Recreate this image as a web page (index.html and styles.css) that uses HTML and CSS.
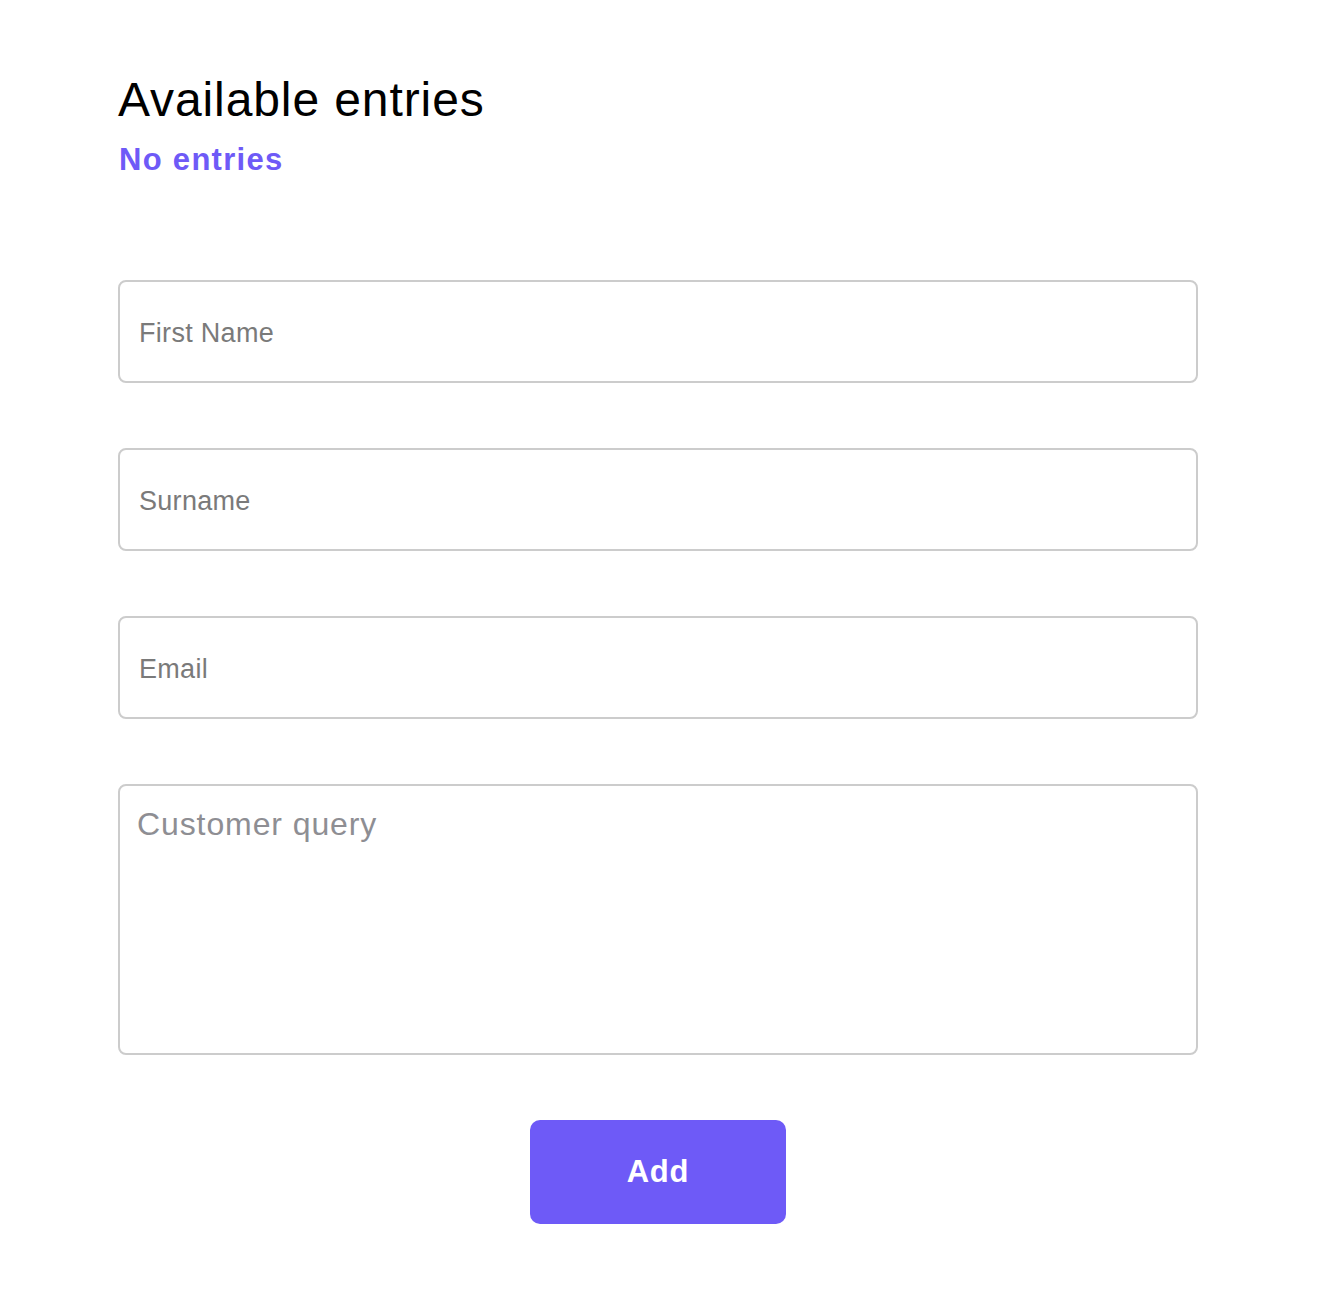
FILE: index.html
```html
<!DOCTYPE html>
<html lang="en">
<head>
<meta charset="utf-8">
<title>Available entries</title>
<link rel="stylesheet" href="styles.css">
</head>
<body>
<main class="page">
  <header class="summary">
    <h1 class="title">Available entries</h1>
    <p class="status">No entries</p>
  </header>
  <form class="entry-form">
    <input class="field" type="text" placeholder="First Name">
    <input class="field" type="text" placeholder="Surname">
    <input class="field" type="email" placeholder="Email">
    <textarea class="field field-area" placeholder="Customer query"></textarea>
    <button class="add-btn" type="button">Add</button>
  </form>
</main>
</body>
</html>
```
FILE: styles.css
```css
html, body {
  margin: 0;
  padding: 0;
  background: #ffffff;
}
body {
  font-family: "Liberation Sans", Arial, sans-serif;
}
.page {
  width: 1080px;
  margin-left: 118px;
  padding-top: 70px;
}
.summary {
  display: flex;
  flex-direction: column;
}
.title {
  margin: 0;
  font-size: 48px;
  font-weight: 400;
  line-height: 60px;
  letter-spacing: 0.9px;
  color: #000;
}
.status {
  margin: 10px 0 0 1px;
  font-size: 31px;
  font-weight: 700;
  line-height: 40px;
  letter-spacing: 1.3px;
  color: #6e5af7;
}
.entry-form {
  display: flex;
  flex-direction: column;
  gap: 65px;
  margin-top: 100px;
}
.field {
  box-sizing: border-box;
  width: 1080px;
  height: 103px;
  margin: 0;
  padding: 3px 19px 0;
  border: 2px solid #cccccc;
  border-radius: 8px;
  font-family: "Liberation Sans", Arial, sans-serif;
  font-size: 27px;
  color: #333;
  background: #fff;
  outline: none;
}
.field::placeholder {
  color: #7a7a7a;
  letter-spacing: 0.3px;
}
.field-area {
  height: 271px;
  padding: 18px 17px;
  font-size: 32px;
  line-height: 40px;
  resize: none;
}
.field-area::placeholder {
  color: #8e8e93;
  letter-spacing: 0.9px;
}
.add-btn {
  align-self: center;
  width: 256px;
  height: 104px;
  margin-top: 0;
  border: none;
  border-radius: 10px;
  background: #6e5af7;
  color: #fff;
  font-family: "Liberation Sans", Arial, sans-serif;
  font-size: 31px;
  font-weight: 700;
  letter-spacing: 0.8px;
}
```
